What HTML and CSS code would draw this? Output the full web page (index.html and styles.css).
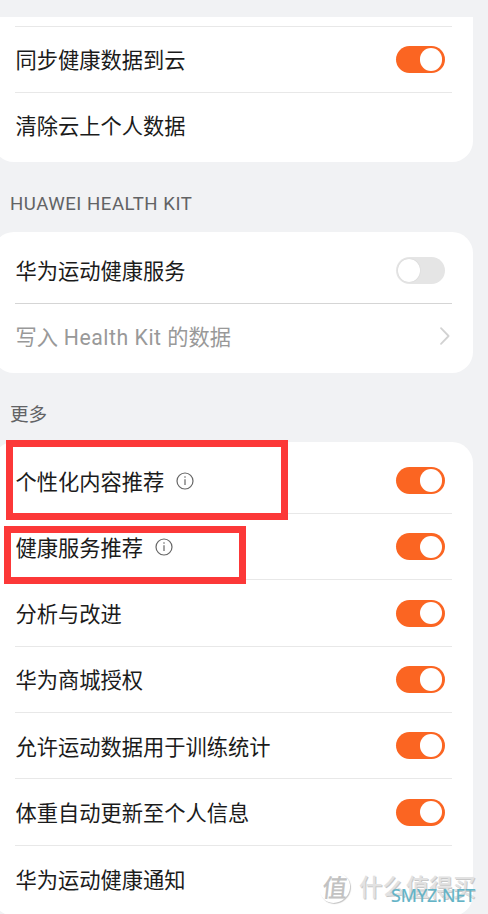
FILE: index.html
```html
<!DOCTYPE html>
<html lang="zh-CN">
<head>
<meta charset="utf-8">
<title>隐私设置</title>
<link rel="stylesheet" href="styles.css">
</head>
<body>
<main class="page">
  <section class="card card-cloud">
    <div class="row"><span class="label">同步健康数据到云</span><i class="toggle on"></i></div>
    <div class="row"><span class="label">清除云上个人数据</span></div>
  </section>

  <h2 class="heading heading-kit">HUAWEI HEALTH KIT</h2>
  <section class="card card-kit">
    <div class="row strong"><span class="label">华为运动健康服务</span><i class="toggle"></i></div>
    <div class="row muted"><span class="label">写入<span class="latin"> Health Kit </span>的数据</span>
      <svg class="chevron" viewBox="0 0 12 20"><path d="M2 2.2 9.6 10 2 17.8"/></svg>
    </div>
  </section>

  <h2 class="heading heading-more">更多</h2>
  <section class="card card-more">
    <div class="row"><span class="label">个性化内容推荐</span>
      <svg class="info" viewBox="0 0 18 18"><circle cx="9" cy="9" r="8"/><path d="M9 7.2v5.8"/><circle class="dot" cx="9" cy="5" r=".8"/></svg>
      <i class="toggle on"></i></div>
    <div class="row"><span class="label">健康服务推荐</span>
      <svg class="info" viewBox="0 0 18 18"><circle cx="9" cy="9" r="8"/><path d="M9 7.2v5.8"/><circle class="dot" cx="9" cy="5" r=".8"/></svg>
      <i class="toggle on"></i></div>
    <div class="row"><span class="label">分析与改进</span><i class="toggle on"></i></div>
    <div class="row"><span class="label">华为商城授权</span><i class="toggle on"></i></div>
    <div class="row"><span class="label">允许运动数据用于训练统计</span><i class="toggle on"></i></div>
    <div class="row"><span class="label">体重自动更新至个人信息</span><i class="toggle on"></i></div>
    <div class="row"><span class="label">华为运动健康通知</span></div>
  </section>

  <div class="mark mark-content"></div>
  <div class="mark mark-service"></div>
  <div class="watermark"><span class="seal">值</span><span class="brand">什么值得买</span></div>
  <div class="site">SMYZ.NET</div>
</main>
</body>
</html>
```
FILE: styles.css
```css
* { box-sizing: border-box; }

body {
  margin: 0;
  background: #f1f2f4;
  color: #1b1b1b;
  font-family: Roboto, "Noto Sans CJK SC", sans-serif;
}

.page {
  position: relative;
  height: 914px;
  padding-top: 17px;
  overflow: hidden;
}

.card {
  width: 480px;
  margin-left: -7px;
  padding: 6px 21px 3px 22px;
  border-radius: 21px;
  background: #fff;
}

.card-cloud {
  height: 145px;
  padding-top: 9px;
  border-radius: 0 0 21px 21px;
}

.card-cloud::before {
  content: "";
  display: block;
  height: 1px;
  background: #e8e8e8;
}

.card-kit { height: 141px; }
.card-more { height: 474px; padding-top: 5.9px; }

.row {
  display: flex;
  align-items: center;
  height: 66px;
  padding-right: 7.5px;
  border-bottom: 1px solid #e8e8e8;
  font-size: 21.25px;
  line-height: 30px;
  white-space: nowrap;
}

.label { padding: 3px 0 0 .5px; }
.latin { letter-spacing: .52px; }

.card-more .row { height: 66.3px; }
.card-more .label { padding-top: 4px; }
.row.strong { border-color: #d5d5d5; }
.row.strong .label { padding-top: 2px; }
.row:last-child { border-bottom: 0; }
.card-cloud .row:last-child .label,
.row.muted .label { padding-top: 1px; }
.row.muted { color: #999; padding-right: 1.5px; }

.heading {
  margin: 0;
  padding-left: 10px;
  color: #626365;
  font-size: 18.6px;
  font-weight: 400;
  line-height: 28px;
}

.heading-kit { height: 70px; padding-top: 28px; letter-spacing: .53px; }
.heading-more { height: 69px; padding-top: 28px; }

.toggle {
  width: 49px;
  height: 27px;
  margin-left: auto;
  padding: 2.2px;
  border-radius: 14px;
  background: #e5e5e5;
}

.toggle::before {
  content: "";
  display: block;
  width: 22.6px;
  height: 22.6px;
  border-radius: 50%;
  background: #fff;
  box-shadow: 0 0 1px #bbb;
}

.toggle.on { background: #fb6522; }
.toggle.on::before { margin-left: auto; box-shadow: none; }

.chevron {
  width: 12px;
  height: 20px;
  margin: -2px 0 0 auto;
  fill: none;
  stroke: #d2d2d2;
  stroke-width: 1.8;
  stroke-linecap: round;
  stroke-linejoin: round;
}

.info {
  width: 18px;
  height: 18px;
  margin-left: 12px;
  fill: none;
  stroke: #666;
  stroke-width: 1.2;
}

.info .dot { fill: #666; stroke: none; }

.mark {
  position: absolute;
  border: 7px solid #fc3838;
}

.mark-content { left: 6px; top: 440px; width: 282px; height: 80px; }
.mark-service { left: 4px; top: 526px; width: 242px; height: 58px; }

.watermark {
  position: absolute;
  left: 320px;
  top: 873px;
  display: flex;
  align-items: center;
  gap: 9px;
  line-height: 30px;
  white-space: nowrap;
}

.seal {
  width: 30px;
  height: 30px;
  border-radius: 50%;
  box-shadow: 1px 1px 1px #c4c4c4;
  color: #c2c2c2;
  font-family: "Noto Sans CJK SC", sans-serif;
  font-size: 25px;
  font-weight: 500;
  line-height: 27px;
  text-align: center;
  transform: skewX(-6deg);
}

.brand {
  color: #e2e2e2;
  font-size: 23.4px;
  font-weight: 500;
  text-shadow: 1px 1px 0 #c8c8c8;
}

.site {
  position: absolute;
  left: 391px;
  top: 884px;
  color: #63b3c6;
  font-family: "Noto Sans", sans-serif;
  font-size: 17.8px;
  line-height: 22px;
  -webkit-text-stroke: .2px #63b3c6;
}
```
